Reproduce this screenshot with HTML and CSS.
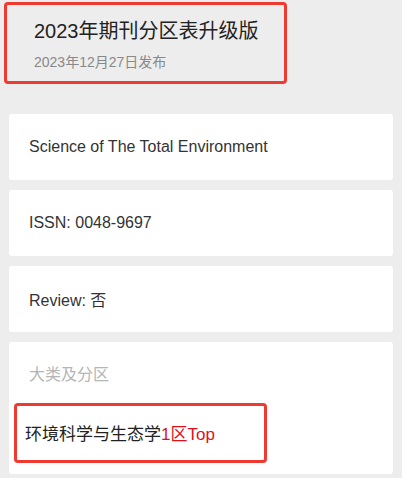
FILE: index.html
```html
<html>
<head>
  <title>期刊分区</title>
  <meta name="viewport" content="width=device-width, initial-scale=1.0">
  <link rel="stylesheet" href="styles.css">
</head>
<body>

  <div class="head">
    <h3 class="title">2023年期刊分区表升级版</h3>
    <div class="date">2023年12月27日发布</div>
    <div class="mark mark-head"></div>
  </div>

  <div class="list">
    <div class="card">Science of The Total Environment</div>
    <div class="card">ISSN: 0048-9697</div>
    <div class="card">Review: 否</div>
    <div class="card card-zone">
      <div class="label">大类及分区</div>
      <div class="zone">环境科学与生态学<span class="red">1区Top</span></div>
      <div class="mark mark-zone"></div>
    </div>
  </div>

</body>
</html>
```

FILE: styles.css
```css
body {
  margin: 0;
  background-color: #ededed;
  color: #333;
  font-family: "Liberation Sans", Arial, "Noto Sans CJK SC", sans-serif;
}

.head {
  position: relative;
  padding: 19px 34px 0;
  height: 95px;
  box-sizing: border-box;
}
.title {
  margin: 0;
  font-size: 20px;
  font-weight: normal;
  line-height: 24px;
  color: #222;
}
.date {
  margin-top: 11px;
  font-size: 14px;
  line-height: 16px;
  color: #888;
}

.mark {
  position: absolute;
  border: 3px solid #ee3a30;
  border-radius: 4px;
}
.mark-head {
  left: 4px;
  top: 2px;
  width: 277px;
  height: 76px;
}

.list {
  display: flex;
  flex-direction: column;
  gap: 10px;
  padding: 19px 9px 0;
}
.card {
  background: #fff;
  border-radius: 3px;
  height: 66px;
  padding-left: 20px;
  display: flex;
  align-items: center;
  font-size: 16px;
}
.card-zone {
  position: relative;
  height: 132px;
  display: block;
  padding-left: 0;
}
.label {
  color: #b5b5b5;
  padding: 24px 0 0 20px;
  line-height: 18px;
}
.zone {
  padding: 41px 0 0 16px;
  font-size: 17px;
  line-height: 20px;
  color: #222;
}
.red {
  color: #e0101c;
}
.mark-zone {
  left: 5px;
  top: 61px;
  width: 247px;
  height: 54px;
}
```
